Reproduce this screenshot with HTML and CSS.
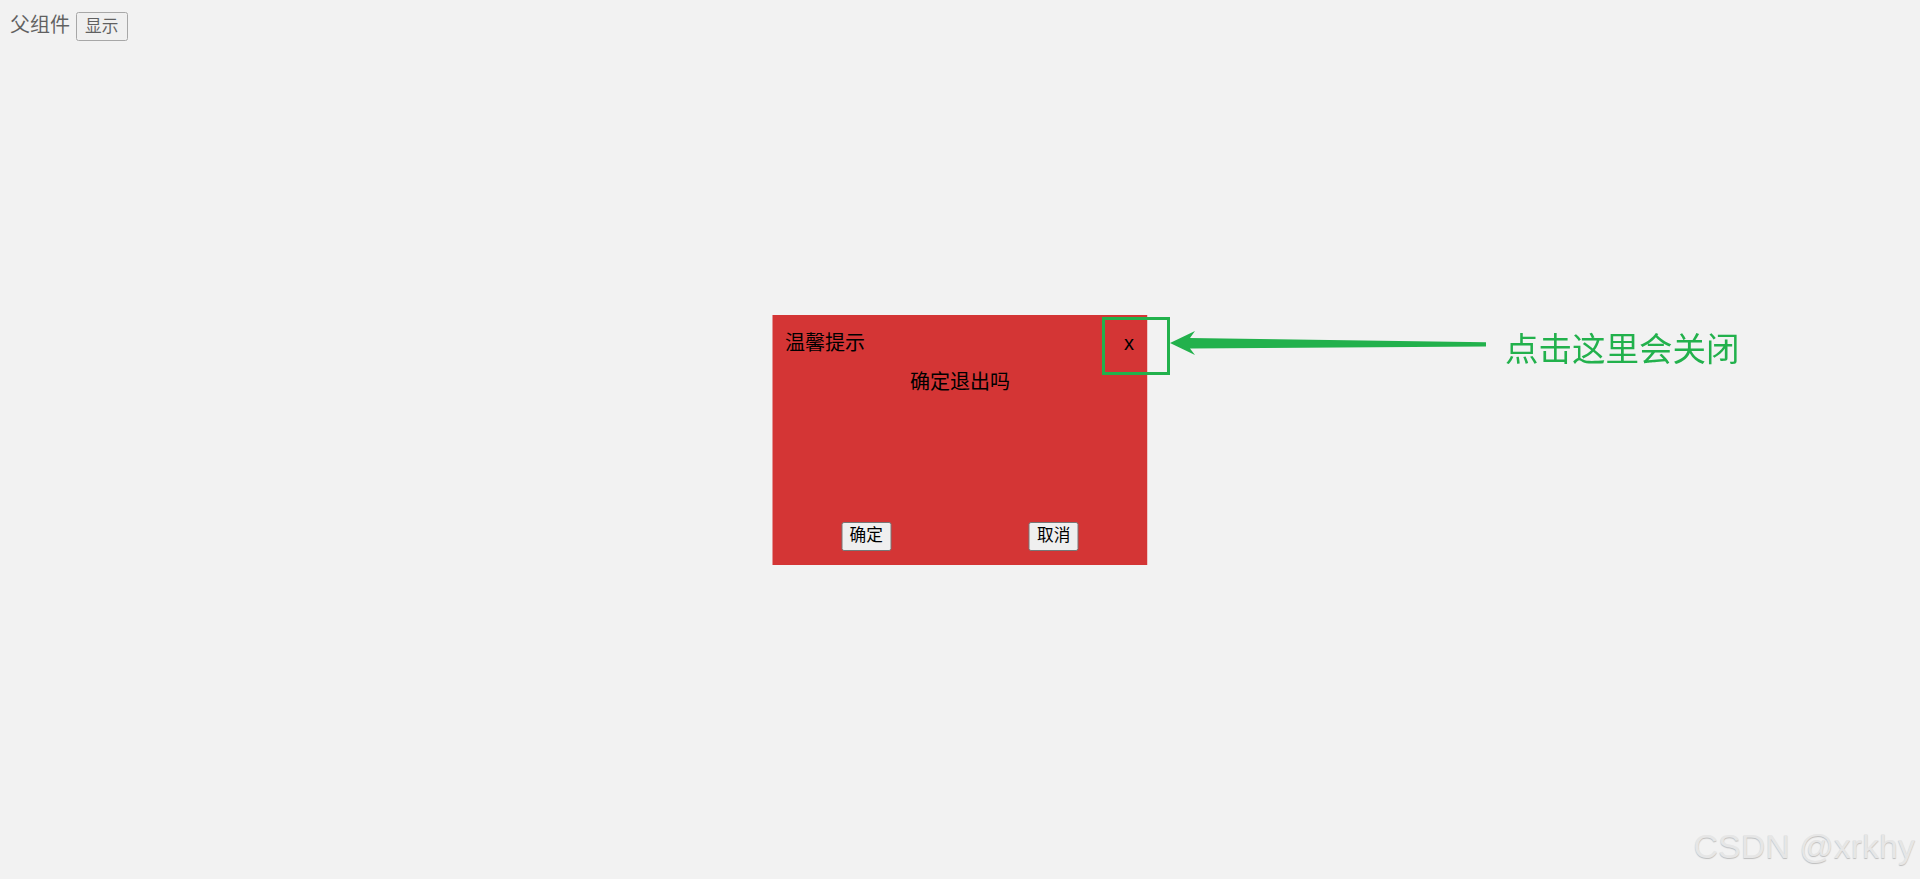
FILE: index.html
```html
<!DOCTYPE html>
<html lang="zh-CN">
<head>
<meta charset="utf-8">
<title>父组件</title>
<link rel="stylesheet" href="styles.css">
</head>
<body>
<div class="parent">父组件 <button class="btn btn-top">显示</button></div>

<div class="dialog">
  <div class="dialog-header">
    <span class="dialog-title">温馨提示</span>
    <span class="dialog-close">x</span>
  </div>
  <div class="dialog-body">确定退出吗</div>
  <div class="dialog-footer">
    <button class="btn">确定</button>
    <button class="btn">取消</button>
  </div>
</div>

<div class="mark-box"></div>
<svg class="mark-arrow" viewBox="1160 320 340 40" width="340" height="40" aria-hidden="true">
  <polygon points="1170,343 1195,331 1190,338 1486,342.3 1486,346.5 1190,348.5 1195,355" fill="#22b14c"/>
</svg>
<div class="mark-text">点击这里会关闭</div>

<div class="watermark">CSDN @xrkhy</div>
</body>
</html>
```

FILE: styles.css
```css
html, body {
  height: 100%;
}
body {
  margin: 10px;
  background: #f2f2f2;
  font-family: "Liberation Sans", "Noto Sans CJK SC", sans-serif;
  font-size: 20px;
  color: #000;
  overflow: hidden;
}
.parent {
  opacity: 0.6;
  line-height: 1.45;
  margin-top: 1px;
}
.btn {
  font-family: "Liberation Sans", "Noto Sans CJK SC", sans-serif;
  font-size: 16.67px;
  padding: 1.25px 7.5px;
  border: 1.25px solid #767676;
  border-radius: 2.5px;
  background: #efefef;
  color: #000;
  line-height: 24.5px;
}
.btn-top {
  line-height: 25px;
  padding: 1.25px 8.5px;
}
.dialog {
  position: fixed;
  left: 50%;
  top: 50%;
  transform: translate(-50%, -50%);
  width: 375px;
  height: 250px;
  box-sizing: border-box;
  padding: 15px 12.5px 14px;
  background: #d43535;
  display: flex;
  flex-direction: column;
}
.dialog-header {
  display: flex;
  justify-content: space-between;
  align-items: center;
  line-height: 27px;
}
.dialog-close {
  margin-right: 1px;
}
.dialog-body {
  margin-top: 12px;
  text-align: center;
  line-height: 27px;
}
.dialog-footer {
  margin-top: auto;
  margin-left: -12.5px;
  margin-right: -12.5px;
  display: flex;
  justify-content: space-around;
}
.mark-box {
  position: absolute;
  left: 1102px;
  top: 317px;
  width: 68px;
  height: 58px;
  box-sizing: border-box;
  border: 3px solid #22b14c;
}
.mark-arrow {
  position: absolute;
  left: 1160px;
  top: 320px;
}
.mark-text {
  position: absolute;
  left: 1505px;
  top: 330px;
  font-family: "Noto Sans CJK SC", sans-serif;
  font-size: 33.5px;
  line-height: 1;
  color: #22b14c;
}
.watermark {
  position: absolute;
  right: 5px;
  top: 829px;
  font-family: "Liberation Sans", sans-serif;
  font-size: 34px;
  line-height: 1;
  color: #e6e6e6;
  text-shadow: 0 1px 1px rgba(0, 0, 0, 0.22);
}
```
